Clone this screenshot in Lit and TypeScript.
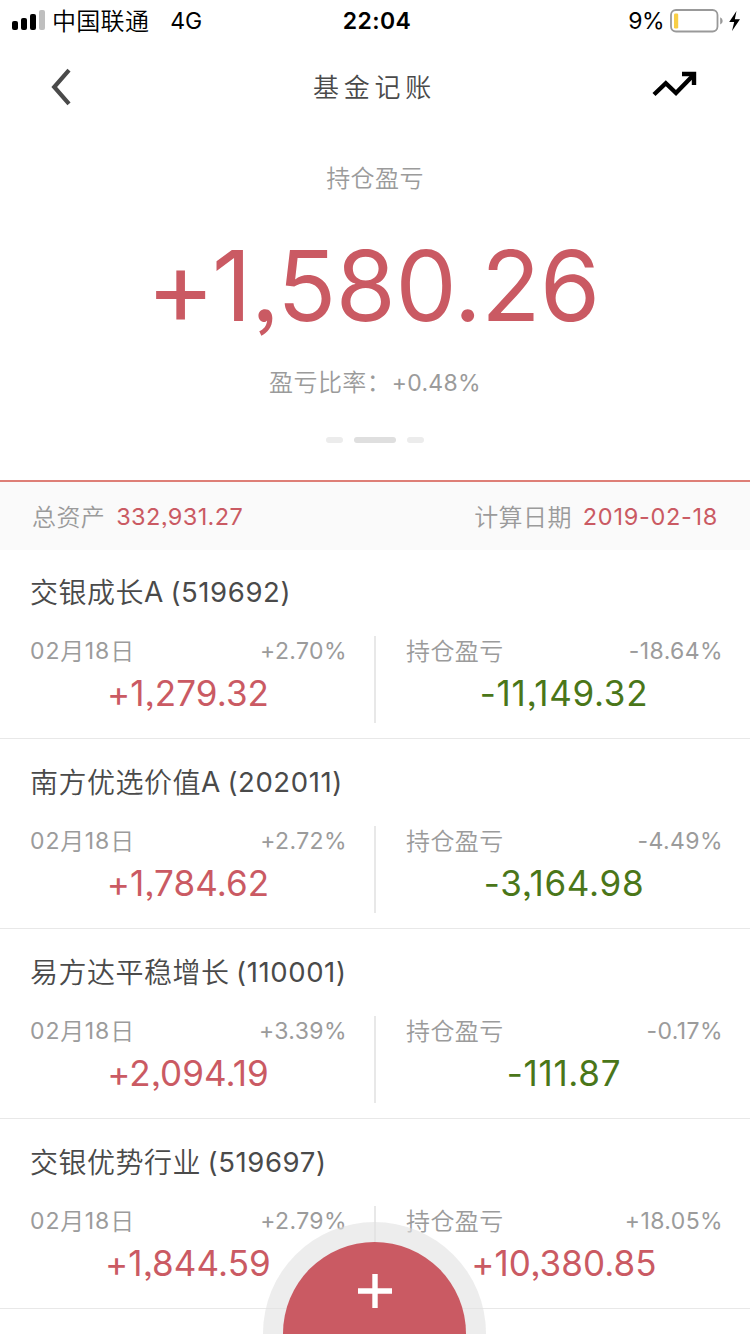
import { LitElement, html, css, svg } from "lit";
import { customElement, property } from "lit/decorators.js";
import { classMap } from "lit/directives/class-map.js";

interface Fund {
  name: string;
  code: string;
  dayRate: string;
  dayGain: string;
  totalRate: string;
  totalGain: string;
}

const FUNDS: Fund[] = [
  { name: "交银成长A", code: "(519692)", dayRate: "+2.70%", dayGain: "+1,279.32", totalRate: "-18.64%", totalGain: "-11,149.32" },
  { name: "南方优选价值A", code: "(202011)", dayRate: "+2.72%", dayGain: "+1,784.62", totalRate: "-4.49%", totalGain: "-3,164.98" },
  { name: "易方达平稳增长", code: "(110001)", dayRate: "+3.39%", dayGain: "+2,094.19", totalRate: "-0.17%", totalGain: "-111.87" },
  { name: "交银优势行业", code: "(519697)", dayRate: "+2.79%", dayGain: "+1,844.59", totalRate: "+18.05%", totalGain: "+10,380.85" },
];

@customElement("status-bar")
class StatusBar extends LitElement {
  static styles = css`
    :host { display: grid; grid-template-columns: 1fr auto 1fr; align-items: center; box-sizing: border-box; height: 40px; padding: 1px 9px 0 12px; color: #000; font-size: 23px; line-height: 39px; }
    .side { display: flex; align-items: center; }
    .right { justify-content: flex-end; }
    .bars { margin-top: -3px; }
    .carrier { margin-left: 6px; font-size: 24px; line-height: 39px; letter-spacing: 0.3px; font-weight: 350; }
    .network { margin-left: 21px; padding-top: 1px; letter-spacing: -0.1px; }
    .time { padding-top: 1px; font-weight: 600; letter-spacing: 0.4px; padding-left: 1px; }
    .percent { padding-top: 1px; letter-spacing: -0.6px; margin-right: 6px; }
    svg { display: block; }
  `;
  render() {
    return html`
      <div class="side">
        <svg class="bars" width="34" height="22" viewBox="0 0 34 22">
          <rect x="0" y="12" width="6" height="9" rx="2" />
          <rect x="9" y="9" width="6" height="12" rx="2" />
          <rect x="18" y="5" width="6" height="16" rx="2" />
          <rect x="27" y="1" width="6" height="20" rx="2" fill="#bfbfbf" />
        </svg>
        <span class="carrier">中国联通</span><span class="network">4G</span>
      </div>
      <span class="time">22:04</span>
      <div class="side right">
        <span class="percent">9%</span>
        <svg width="71" height="24" viewBox="0 0 71 24">
          <rect x="1" y="1" width="46.5" height="21.5" rx="5" fill="none" stroke="#999" stroke-width="1.8" />
          <rect x="4" y="4.5" width="4.2" height="15" rx="1.2" fill="#f8ce46" />
          <path d="M50.2 8.2a4 4 0 0 1 0 7.4z" fill="#999" />
          <path d="M66.5 2 59.2 13h5L62 22 70 10.3h-5.2z" />
        </svg>
      </div>
    `;
  }
}

@customElement("nav-header")
class NavHeader extends LitElement {
  static styles = css`
    :host { display: grid; grid-template-columns: 1fr auto 1fr; align-items: center; height: 94px; padding: 0 52px 0 51px; color: #4a4a4a; }
    .title { padding-top: 2px; font-size: 26px; font-weight: 350; letter-spacing: 4.7px; line-height: 92px; }
    .chart { justify-self: end; }
    svg { display: block; }
  `;
  render() {
    return html`
      <svg width="22" height="38" viewBox="0 0 22 38" fill="none" stroke="#4a4a4a" stroke-width="4.2">
        <path d="M18 2.2 3.2 19 18 35.8" stroke-linejoin="miter" />
      </svg>
      <span class="title">基金记账</span>
      <svg class="chart" width="46" height="34" viewBox="0 0 46 34" fill="none" stroke="#000" stroke-width="4.4">
        <path d="M2 24.5 13.8 13.2 24 23 42 4.5" />
        <path d="M30 4H42V15" />
      </svg>
    `;
  }
}

@customElement("profit-summary")
class ProfitSummary extends LitElement {
  static styles = css`
    :host { display: flex; flex-direction: column; align-items: center; height: 346px; color: #9b9b9b; border-bottom: 2px solid #de7f77; }
    .label { margin-top: 27px; font-size: 24px; font-weight: 350; line-height: 36px; letter-spacing: 0.4px; }
    .total { margin: 27px 4px 0 0; height: 124px; font-size: 97px; line-height: 124px; color: #ca5a63; letter-spacing: -0.4px; white-space: nowrap; font-feature-settings: "calt" 0, "ss03" 1; }
    .sign { font-size: 104px; line-height: 0; vertical-align: -4px; margin-right: -2.5px; }
    .ratio { margin-top: 17px; line-height: 36px; font-size: 24px; font-weight: 350; letter-spacing: 0.4px; white-space: nowrap; }
    .num { margin-left: 0.6px; font-size: 23px; font-weight: 400; letter-spacing: 0.3px; line-height: 1; font-feature-settings: "calt" 0; }
    .pager { display: flex; gap: 11px; margin-top: 36px; }
    .dot { width: 17px; height: 6px; border-radius: 3px; background: #ececec; }
    .current { width: 42px; background: #dfdfdf; }
  `;
  render() {
    return html`
      <div class="label">持仓盈亏</div>
      <div class="total"><span class="sign">+</span>1,580.26</div>
      <div class="ratio">盈亏比率：<span class="num">+0.48%</span></div>
      <div class="pager"><i class="dot"></i><i class="dot current"></i><i class="dot"></i></div>
    `;
  }
}

@customElement("asset-bar")
class AssetBar extends LitElement {
  static styles = css`
    :host { display: flex; justify-content: space-between; height: 68px; padding: 0 32px; background: #fafafa; color: #9b9b9b; font-size: 24px; font-weight: 350; line-height: 71px; letter-spacing: 0.4px; white-space: nowrap; }
    .value { margin-left: 11px; color: #ca5a63; font-size: 23.5px; font-weight: 400; letter-spacing: 0.4px; line-height: 1; vertical-align: 1px; font-feature-settings: "calt" 0, "ss03" 1; }
    .date { letter-spacing: 0.7px; }
  `;
  render() {
    return html`
      <div>总资产<span class="value">332,931.27</span></div>
      <div>计算日期<span class="value date">2019-02-18</span></div>
    `;
  }
}

@customElement("fund-row")
class FundRow extends LitElement {
  @property({ attribute: false }) fund!: Fund;
  static styles = css`
    :host { display: block; box-sizing: border-box; height: 190px; padding-top: 23px; border-top: 1px solid #e8e8e8; font-feature-settings: "calt" 0, "ss03" 1; }
    :host(:first-child) { height: 188px; padding-top: 22px; border-top: none; }
    .name { padding-left: 30px; font-size: 28px; font-weight: 350; line-height: 42px; letter-spacing: 0.5px; color: #4a4a4a; white-space: pre; }
    .code { margin-left: -1.8px; font-size: 27.5px; font-weight: 400; letter-spacing: 0.6px; line-height: 1; vertical-align: 1px; }
    .latin { font-weight: 400; line-height: 1; vertical-align: 1px; }
    .columns { display: grid; grid-template-columns: 374px 2px 374px; height: 87px; margin-top: 22px; }
    .divider { background: #e8e8e8; }
    .day { padding: 0 27px 0 30px; }
    .held { padding: 0 27px 0 30px; }
    .meta { display: flex; justify-content: space-between; padding-top: 1px; color: #9b9b9b; font-size: 24px; font-weight: 350; line-height: 30px; letter-spacing: 0.4px; }
    .num { font-size: 23px; font-weight: 400; letter-spacing: 0.9px; line-height: 1; vertical-align: 1px; }
    .rate { margin-top: -1px; font-size: 23px; font-weight: 400; letter-spacing: 0.4px; }
    .gain { font-size: 35px; line-height: 52px; text-align: center; color: #ca5a63; letter-spacing: 0.1px; margin-left: -1px; }
    .loss { color: #4a7619; letter-spacing: 0.7px; }
  `;
  private amount(value: string) {
    return html`<div class=${classMap({ gain: true, loss: value.startsWith("-") })}>${value}</div>`;
  }
  render() {
    const f = this.fund;
    const cn = f.name.replace(/A$/, "");
    return html`
      <div class="name">${cn}<span class="latin">${f.name.slice(cn.length)}</span><span class="code"> ${f.code}</span></div>
      <div class="columns">
        <div class="day">
          <div class="meta"><span><span class="num">02</span>月<span class="num">18</span>日</span><span class="rate">${f.dayRate}</span></div>
          ${this.amount(f.dayGain)}
        </div>
        <div class="divider"></div>
        <div class="held">
          <div class="meta"><span>持仓盈亏</span><span class="rate">${f.totalRate}</span></div>
          ${this.amount(f.totalGain)}
        </div>
      </div>
    `;
  }
}

@customElement("app-root")
class AppRoot extends LitElement {
  static styles = css`
    :host { display: block; position: relative; width: 750px; height: 1334px; overflow: hidden; background: #fff; font-family: Inter, "Noto Sans CJK SC", sans-serif; font-weight: 400; }
    .list { display: block; }
    .end { height: 1px; background: #e8e8e8; }
    .add { position: absolute; left: 263px; top: 1222px; width: 223px; height: 223px; }
  `;
  render() {
    return html`
      <status-bar></status-bar>
      <nav-header></nav-header>
      <profit-summary></profit-summary>
      <asset-bar></asset-bar>
      <div class="list">${FUNDS.map((f) => html`<fund-row .fund=${f}></fund-row>`)}</div>
      <div class="end"></div>
      <svg class="add" viewBox="0 0 223 223">
        ${svg`<circle cx="111.5" cy="111.5" r="111.5" fill="#e1e1e1" fill-opacity="0.6" />
        <circle cx="111.5" cy="111.5" r="91.5" fill="#ca5a63" />
        <path d="M95 69H129M112 52V86" stroke="#fff" stroke-width="5.4" />`}
      </svg>
    `;
  }
}
